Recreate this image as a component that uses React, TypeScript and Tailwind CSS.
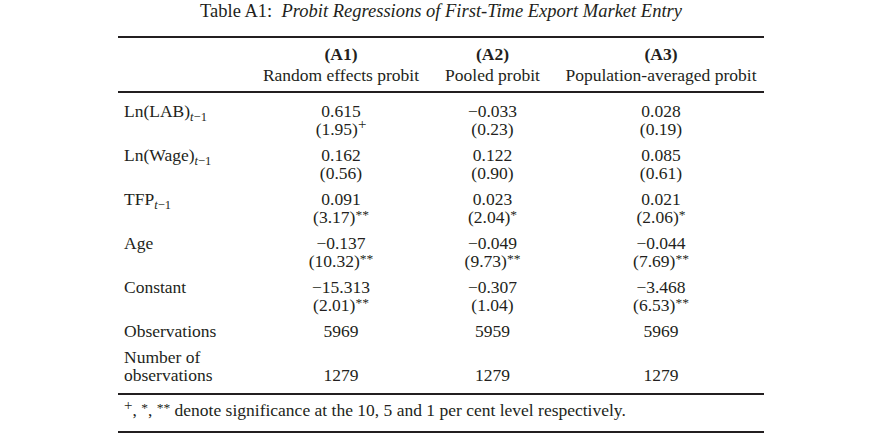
const serif = "font-['Liberation_Serif','Times_New_Roman',serif]";

type Row = {
  label: React.ReactNode;
  vals: [React.ReactNode, React.ReactNode][];
};

// subscript t−1
const Sub = () => (
  <span className="relative top-[4px] text-[12.5px] leading-[0]">
    <span className="italic">t</span>−1
  </span>
);

// significance marks
const Plus = () => <span className="relative -top-[6px] text-[15px] leading-[0]">+</span>;
const Star = ({ n }: { n: number }) => (
  <span className="relative -top-[4px] text-[13.5px] leading-[0]">{"*".repeat(n)}</span>
);

const rows: Row[] = [
  {
    label: (
      <>
        Ln(LAB)
        <Sub />
      </>
    ),
    vals: [
      ["0.615", <>(1.95)<Plus /></>],
      ["−0.033", "(0.23)"],
      ["0.028", "(0.19)"],
    ],
  },
  {
    label: (
      <>
        Ln(Wage)
        <Sub />
      </>
    ),
    vals: [
      ["0.162", "(0.56)"],
      ["0.122", "(0.90)"],
      ["0.085", "(0.61)"],
    ],
  },
  {
    label: (
      <>
        TFP
        <Sub />
      </>
    ),
    vals: [
      ["0.091", <>(3.17)<Star n={2} /></>],
      ["0.023", <>(2.04)<Star n={1} /></>],
      ["0.021", <>(2.06)<Star n={1} /></>],
    ],
  },
  {
    label: "Age",
    vals: [
      ["−0.137", <>(10.32)<Star n={2} /></>],
      ["−0.049", <>(9.73)<Star n={2} /></>],
      ["−0.044", <>(7.69)<Star n={2} /></>],
    ],
  },
  {
    label: "Constant",
    vals: [
      ["−15.313", <>(2.01)<Star n={2} /></>],
      ["−0.307", "(1.04)"],
      ["−3.468", <>(6.53)<Star n={2} /></>],
    ],
  },
];

const cols = "grid grid-cols-[132px_182px_121px_211px]";
const cellPad = ["px-[12px]", "px-[12px]", "pl-[12px] pr-[7px]"];

export default function App() {
  return (
    <div className={`${serif} w-[877px] h-[436px] bg-white text-[#231f20] overflow-hidden`}>
      <div className="ml-[118px] w-[646px]">
        {/* caption */}
        <div className="text-center text-[18.5px] leading-[22px] whitespace-nowrap">
          Table A1:&nbsp; <span className="italic">Probit Regressions of First-Time Export Market Entry</span>
        </div>

        <div className="mt-[14px] h-[2px] bg-[#231f20]" />

        {/* header */}
        <div className={`${cols} pt-[6px] pb-[5px] text-[17.5px] leading-[21px]`}>
          <div />
          {[
            ["(A1)", "Random effects probit"],
            ["(A2)", "Pooled probit"],
            ["(A3)", "Population-averaged probit"],
          ].map(([a, b], i) => (
            <div key={a} className={`${cellPad[i]} text-center whitespace-nowrap`}>
              <div className="font-bold">{a}</div>
              <div>{b}</div>
            </div>
          ))}
        </div>

        <div className="h-[2px] bg-[#231f20]" />

        {/* body */}
        <div className="pt-[9px] pb-[1px] text-[17.5px] leading-[18px] flex flex-col gap-[8px]">
          {rows.map((r, idx) => (
            <div key={idx} className={cols}>
              <div className="pl-[6px] whitespace-nowrap h-[36px]">{r.label}</div>
              {r.vals.map(([c, t], i) => (
                <div key={i} className={`${cellPad[i]} text-center whitespace-nowrap h-[36px]`}>
                  <div className="h-[18px]">{c}</div>
                  <div className="h-[18px]">{t}</div>
                </div>
              ))}
            </div>
          ))}

          <div className={cols}>
            <div className="pl-[6px]">Observations</div>
            {["5969", "5959", "5969"].map((v, i) => (
              <div key={i} className={`${cellPad[i]} text-center`}>
                {v}
              </div>
            ))}
          </div>

          <div className={cols}>
            <div className="pl-[6px]">
              <div>Number of</div>
              <div>observations</div>
            </div>
            {["1279", "1279", "1279"].map((v, i) => (
              <div key={i} className={`${cellPad[i]} text-center flex items-end justify-center`}>
                {v}
              </div>
            ))}
          </div>
        </div>

        <div className="mt-[8px] h-[2px] bg-[#231f20]" />

        {/* footnote */}
        <div className="pl-[6px] pt-[6px] pb-[10px] h-[36px] text-[17.5px] leading-[18px] whitespace-nowrap">
          <Plus />, <Star n={1} />, <Star n={2} /> denote significance at the 10, 5 and 1 per cent level respectively.
        </div>

        <div className="h-[2px] bg-[#231f20]" />
      </div>
    </div>
  );
}
